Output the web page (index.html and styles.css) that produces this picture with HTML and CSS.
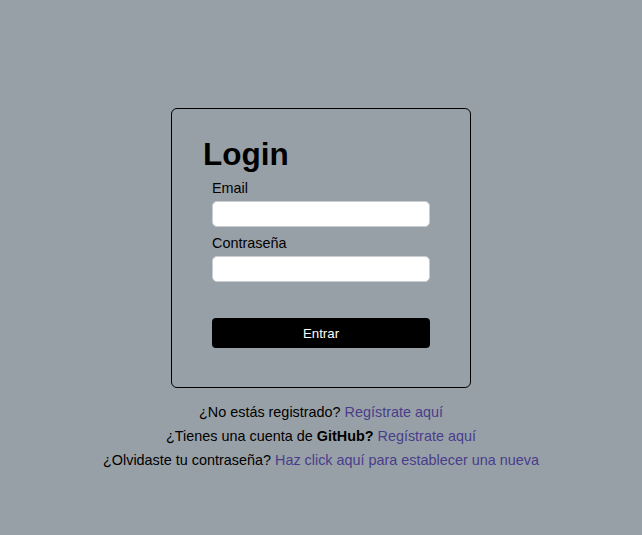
FILE: index.html
```html
<!DOCTYPE html>
<html lang="es">
<head>
<meta charset="utf-8">
<title>Login</title>
<link rel="stylesheet" href="styles.css">
</head>
<body>
<main class="page">
  <section class="card">
    <h1 class="title">Login</h1>
    <form class="form">
      <label class="label" for="email">Email</label>
      <input class="input" id="email" type="email">
      <label class="label label-second" for="pass">Contraseña</label>
      <input class="input" id="pass" type="password">
      <button class="btn" type="button">Entrar</button>
    </form>
  </section>
  <div class="links">
    <p class="line">¿No estás registrado? <a class="link" href="#">Regístrate aquí</a></p>
    <p class="line">¿Tienes una cuenta de <strong>GitHub?</strong> <a class="link" href="#">Regístrate aquí</a></p>
    <p class="line">¿Olvidaste tu contraseña? <a class="link" href="#">Haz click aquí para establecer una nueva</a></p>
  </div>
</main>
</body>
</html>
```
FILE: styles.css
```css
* { box-sizing: border-box; }
html, body {
  margin: 0;
  height: 100%;
}
body {
  background: #98a0a7;
  font-family: "Liberation Sans", Arial, sans-serif;
  color: #000;
}
.page {
  display: flex;
  flex-direction: column;
  align-items: center;
  padding-top: 108px;
}
.card {
  width: 300px;
  height: 280px;
  border: 1px solid #000;
  border-radius: 6px;
  padding: 27px 40px 0 31px;
}
.title {
  margin: 0;
  font-size: 31.5px;
  line-height: 36px;
  font-weight: bold;
}
.form {
  display: flex;
  flex-direction: column;
  padding-left: 9px;
  margin-top: 8px;
}
.label {
  font-size: 14.4px;
  line-height: 17px;
  margin-bottom: 4px;
}
.label-second {
  margin-top: 8px;
}
.input {
  width: 218px;
  height: 26px;
  border: 1px solid #c9cdd1;
  border-radius: 5px;
  background: #fff;
  margin: 0;
}
.btn {
  margin-top: 36px;
  width: 218px;
  height: 30px;
  border: none;
  border-radius: 4px;
  background: #000;
  color: #fff;
  font-family: "Liberation Sans", Arial, sans-serif;
  font-size: 13.3px;
  padding: 0;
}
.links {
  margin-top: 12px;
  text-align: center;
  font-size: 14.4px;
  line-height: 24px;
}
.line {
  margin: 0;
}
.link {
  color: #483d8b;
  text-decoration: none;
}
```
